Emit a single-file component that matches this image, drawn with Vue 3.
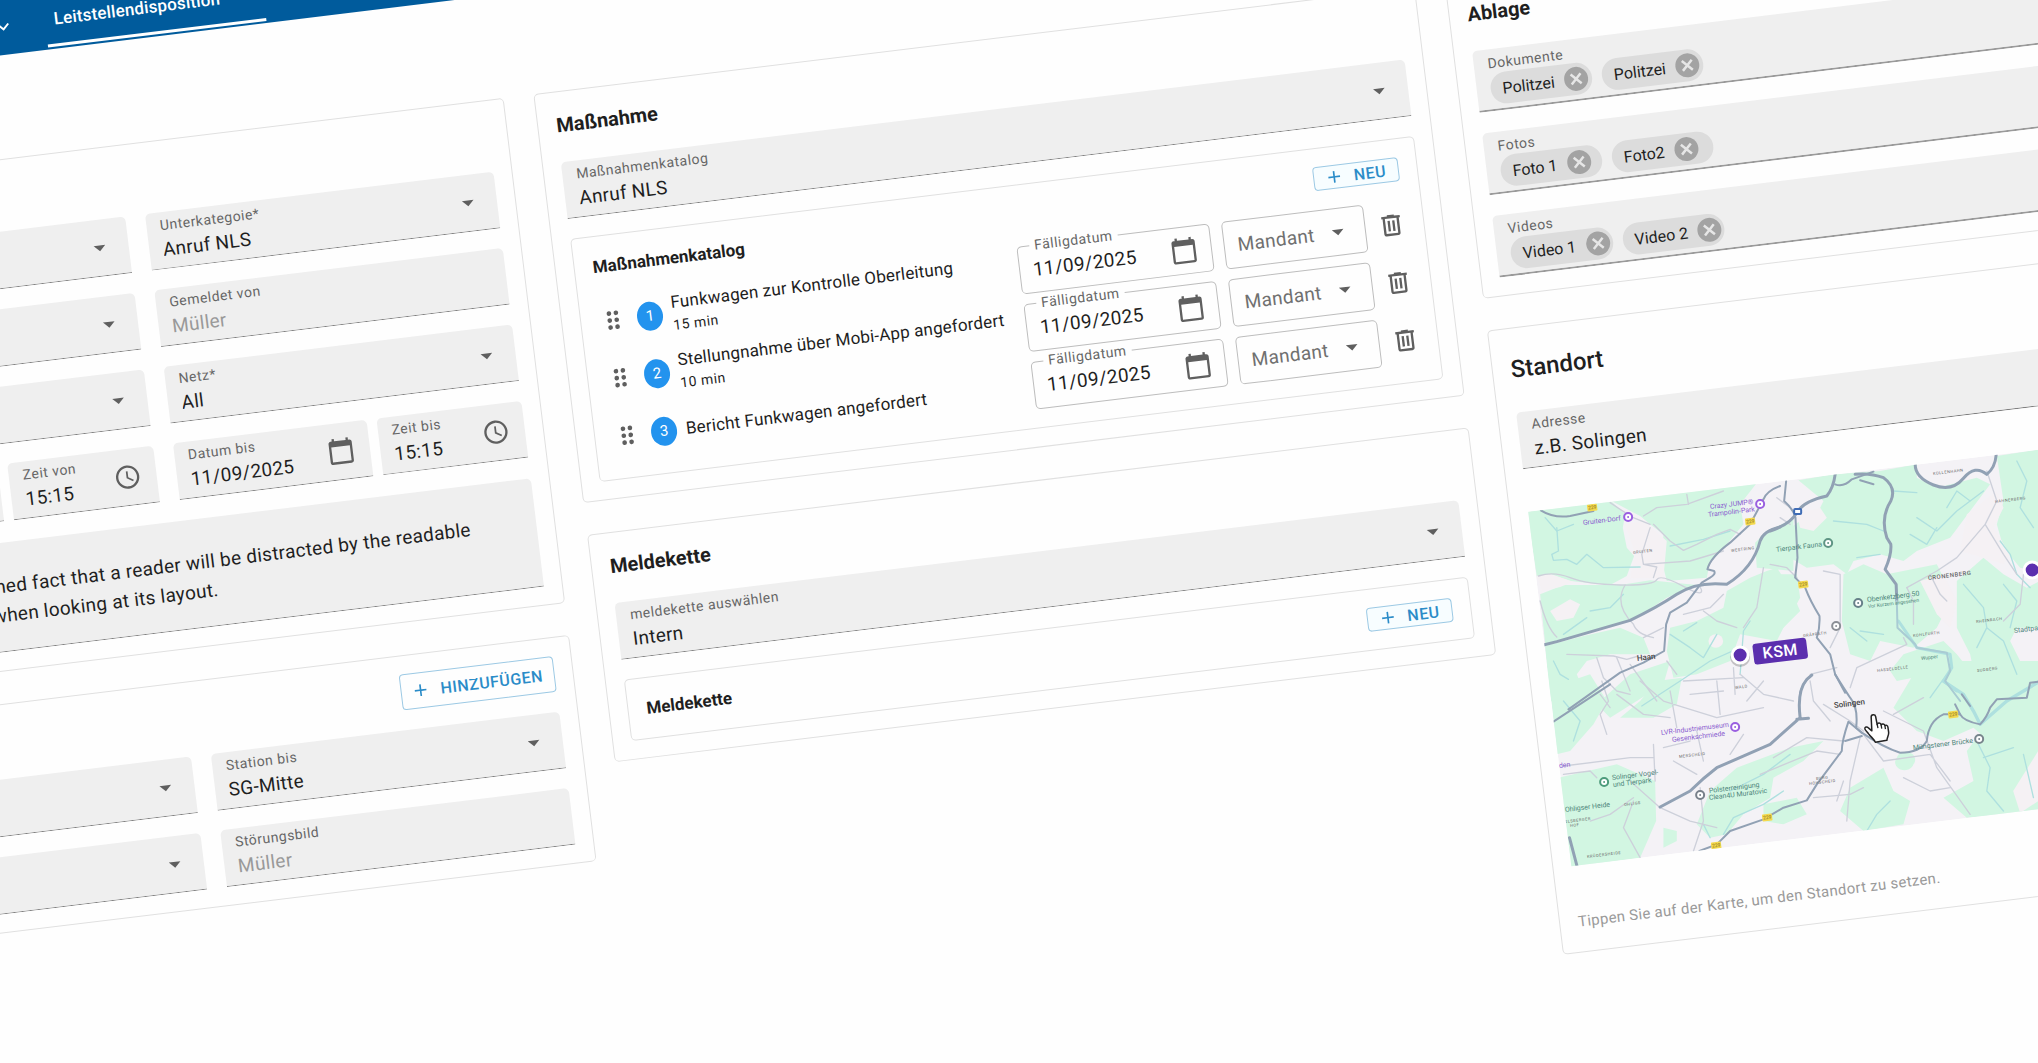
<script setup>
import { ref } from 'vue';

const icons = {
  caret: 'M7 10l5 5 5-5z',
  chevron: 'M7.4 8.6L12 13.2l4.6-4.6L18 10l-6 6-6-6z',
  plus: 'M19 13h-6v6h-2v-6H5v-2h6V5h2v6h6z',
  calendar:
    'M20 3h-1V1h-2v2H7V1H5v2H4c-1.1 0-2 .9-2 2v16c0 1.1.9 2 2 2h16c1.1 0 2-.9 2-2V5c0-1.1-.9-2-2-2zm0 18H4V8h16v13z',
  clock:
    'M12 2C6.5 2 2 6.5 2 12s4.5 10 10 10 10-4.5 10-10S17.5 2 12 2zm0 18c-4.4 0-8-3.6-8-8s3.6-8 8-8 8 3.6 8 8-3.6 8-8 8zm.5-13H11v6l5.2 3.1.8-1.2-4.5-2.7z',
  trash:
    'M15 4V3H9v1H4v2h1v13c0 1.1.9 2 2 2h10c1.1 0 2-.9 2-2V6h1V4zm2 15H7V6h10zM9 8h2v9H9zm4 0h2v9h-2z',
  drag: 'M11 18a2 2 0 1 1-4 0 2 2 0 0 1 4 0zm0-6a2 2 0 1 1-4 0 2 2 0 0 1 4 0zm0-6a2 2 0 1 1-4 0 2 2 0 0 1 4 0zm6 0a2 2 0 1 1-4 0 2 2 0 0 1 4 0zm0 6a2 2 0 1 1-4 0 2 2 0 0 1 4 0zm0 6a2 2 0 1 1-4 0 2 2 0 0 1 4 0z',
};

const comment = ref(
  'It is a long established fact that a reader will be distracted by the readable content of a page when looking at its layout.'
);

const tasks = ref([
  { id: 1, title: 'Funkwagen zur Kontrolle Oberleitung', duration: '15 min', date: '11/09/2025' },
  { id: 2, title: 'Stellungnahme über Mobi-App angefordert', duration: '10 min', date: '11/09/2025' },
  { id: 3, title: 'Bericht Funkwagen angefordert', duration: '', date: '11/09/2025' },
]);

const files = ref([
  { label: 'Dokumente', items: ['Politzei', 'Politzei'] },
  { label: 'Fotos', items: ['Foto 1', 'Foto2'] },
  { label: 'Videos', items: ['Video 1', 'Video 2'] },
]);

const removeTask = (index) => {
  tasks.value.splice(index, 1);
};

const removeFile = (group, index) => {
  group.items.splice(index, 1);
};

// x / y are map positions, type picks the colour and size
const places = [
  { x: 1583, y: 524, type: 'poi', text: 'Gruiten-Dorf' },
  { x: 1710, y: 508, type: 'poi', text: 'Crazy JUMP®' },
  { x: 1708, y: 516, type: 'poi', text: 'Trampolin-Park' },
  { x: 1661, y: 734, type: 'poi', text: 'LVR-Industriemuseum' },
  { x: 1672, y: 741, type: 'poi', text: 'Gesenkschmiede' },
  { x: 1559, y: 767, type: 'poi', text: 'den' },
  { x: 1776, y: 551, type: 'park', text: 'Tierpark Fauna' },
  { x: 1867, y: 601, type: 'park', text: 'Obenketzberg 50' },
  { x: 1868, y: 607, type: 'note', text: 'Vor Kurzem angesehen' },
  { x: 2014, y: 632, type: 'park', text: 'Stadtpark' },
  { x: 1913, y: 749, type: 'park', text: 'Müngstener Brücke' },
  { x: 1612, y: 779, type: 'park', text: 'Solinger Vogel-' },
  { x: 1613, y: 786, type: 'park', text: 'und Tierpark' },
  { x: 1709, y: 792, type: 'park', text: 'Polsterreinigung' },
  { x: 1709, y: 799, type: 'park', text: 'Clean4U Muratovic' },
  { x: 1565, y: 811, type: 'park', text: 'Ohligser Heide' },
  { x: 1921, y: 659, type: 'note', text: 'Wupper' },
  { x: 1637, y: 660, type: 'town', text: 'Haan' },
  { x: 1834, y: 707, type: 'town', text: 'Solingen' },
  { x: 1928, y: 579, type: 'area', text: 'CRONENBERG' },
  { x: 1633, y: 553, type: 'quarter', text: 'GRUITEN' },
  { x: 1731, y: 551, type: 'quarter', text: 'WESTRING' },
  { x: 1735, y: 688, type: 'quarter', text: 'WALD' },
  { x: 1933, y: 474, type: 'quarter', text: 'KÜLLENHAHN' },
  { x: 1995, y: 502, type: 'quarter', text: 'HAHNERBERG' },
  { x: 1976, y: 622, type: 'quarter', text: 'RHEINBACH' },
  { x: 1803, y: 636, type: 'quarter', text: 'GRÄFRATH' },
  { x: 1913, y: 636, type: 'quarter', text: 'KOHLFURTH' },
  { x: 1877, y: 671, type: 'quarter', text: 'HASSELDELLE' },
  { x: 1977, y: 671, type: 'quarter', text: 'SUDBERG' },
  { x: 1679, y: 757, type: 'quarter', text: 'MERSCHEID' },
  { x: 1816, y: 779, type: 'quarter', text: 'BURG' },
  { x: 1809, y: 784, type: 'quarter', text: 'HÖHSCHEID' },
  { x: 1624, y: 805, type: 'quarter', text: 'OHLIGS' },
  { x: 1565, y: 822, type: 'quarter', text: 'ELSBERGER' },
  { x: 1570, y: 826, type: 'quarter', text: 'HOF' },
  { x: 1587, y: 857, type: 'quarter', text: 'KRÜDERSHEIDE' },
];

const pins = [
  { x: 1628, y: 516, color: '#9a5fe0' },
  { x: 1760, y: 503, color: '#9a5fe0' },
  { x: 1735, y: 726, color: '#9a5fe0' },
  { x: 1828, y: 542, color: '#5f9484' },
  { x: 1858, y: 602, color: '#678089' },
  { x: 1836, y: 625, color: '#8b8f96' },
  { x: 1979, y: 738, color: '#78858c' },
  { x: 1604, y: 781, color: '#4d9b7b' },
  { x: 1700, y: 794, color: '#78808a' },
];

const shields = [
  { x: 1592, y: 506 },
  { x: 1750, y: 520 },
  { x: 1803, y: 583 },
  { x: 1953, y: 713 },
  { x: 1767, y: 816 },
  { x: 1716, y: 844 },
];
</script>

<template>
  <div class="viewport">
    <div class="board">
      <header class="topbar">
        <button class="tab" aria-label="Menü">
          <svg class="chevron" viewBox="0 0 24 24"><path :d="icons.chevron" /></svg>
        </button>
        <button class="tab active">
          Leitstellendisposition
          <svg class="chevron" viewBox="0 0 24 24"><path :d="icons.chevron" /></svg>
        </button>
      </header>

      <main class="columns">
        <!-- Report -->
        <div class="column">
          <section class="card details">
            <div class="pair">
              <div class="field">
                <select aria-label="Kategorie"></select>
                <svg class="icon" viewBox="0 0 24 24"><path :d="icons.caret" /></svg>
              </div>
              <div class="field">
                <label for="subcategory">Unterkategoie*</label>
                <select id="subcategory"><option>Anruf NLS</option></select>
                <svg class="icon" viewBox="0 0 24 24"><path :d="icons.caret" /></svg>
              </div>
              <div class="field">
                <select aria-label="Meldeweg"></select>
                <svg class="icon" viewBox="0 0 24 24"><path :d="icons.caret" /></svg>
              </div>
              <div class="field">
                <label for="reporter">Gemeldet von</label>
                <input id="reporter" type="text" placeholder="Müller" />
              </div>
              <div class="field">
                <select aria-label="Bereich"></select>
                <svg class="icon" viewBox="0 0 24 24"><path :d="icons.caret" /></svg>
              </div>
              <div class="field">
                <label for="net">Netz*</label>
                <select id="net"><option>All</option></select>
                <svg class="icon" viewBox="0 0 24 24"><path :d="icons.caret" /></svg>
              </div>
              <div class="period">
                <div class="field">
                  <input type="text" aria-label="Datum von" />
                </div>
                <div class="field">
                  <label for="time-from">Zeit von</label>
                  <input id="time-from" type="text" value="15:15" />
                  <svg class="icon" viewBox="0 0 24 24"><path :d="icons.clock" /></svg>
                </div>
              </div>
              <div class="period">
                <div class="field">
                  <label for="date-to">Datum bis</label>
                  <input id="date-to" type="text" value="11/09/2025" />
                  <svg class="icon" viewBox="0 0 24 24"><path :d="icons.calendar" /></svg>
                </div>
                <div class="field">
                  <label for="time-to">Zeit bis</label>
                  <input id="time-to" type="text" value="15:15" />
                  <svg class="icon" viewBox="0 0 24 24"><path :d="icons.clock" /></svg>
                </div>
              </div>
            </div>
            <textarea v-model="comment" class="comment" aria-label="Bemerkung"></textarea>
          </section>

          <section class="card">
            <div class="actions">
              <button class="outline-button">
                <svg viewBox="0 0 24 24"><path :d="icons.plus" /></svg>
                HINZUFÜGEN
              </button>
            </div>
            <div class="pair">
              <div class="field">
                <select aria-label="Station von"></select>
                <svg class="icon" viewBox="0 0 24 24"><path :d="icons.caret" /></svg>
              </div>
              <div class="field">
                <label for="station-to">Station bis</label>
                <select id="station-to"><option>SG-Mitte</option></select>
                <svg class="icon" viewBox="0 0 24 24"><path :d="icons.caret" /></svg>
              </div>
              <div class="field">
                <select aria-label="Störung"></select>
                <svg class="icon" viewBox="0 0 24 24"><path :d="icons.caret" /></svg>
              </div>
              <div class="field">
                <label for="fault">Störungsbild</label>
                <input id="fault" type="text" placeholder="Müller" />
              </div>
            </div>
          </section>
        </div>

        <!-- Measures -->
        <div class="column">
          <section class="card">
            <h2>Maßnahme</h2>
            <div class="field">
              <label for="catalog">Maßnahmenkatalog</label>
              <select id="catalog"><option>Anruf NLS</option></select>
              <svg class="icon" viewBox="0 0 24 24"><path :d="icons.caret" /></svg>
            </div>
            <div class="subcard">
              <div class="subcard-head">
                <h3>Maßnahmenkatalog</h3>
                <button class="outline-button small">
                  <svg viewBox="0 0 24 24"><path :d="icons.plus" /></svg>
                  NEU
                </button>
              </div>
              <ul class="tasks">
                <li v-for="(task, index) in tasks" :key="task.id">
                  <svg class="icon" viewBox="0 0 24 24"><path :d="icons.drag" /></svg>
                  <span class="number">{{ task.id }}</span>
                  <div class="task-text">
                    <div class="task-title">{{ task.title }}</div>
                    <div v-if="task.duration" class="task-duration">{{ task.duration }}</div>
                  </div>
                  <div class="outlined due">
                    <label :for="`due-${task.id}`">Fälligdatum</label>
                    <input :id="`due-${task.id}`" v-model="task.date" type="text" />
                    <svg class="icon" viewBox="0 0 24 24"><path :d="icons.calendar" /></svg>
                  </div>
                  <div class="outlined client">
                    <select aria-label="Mandant"><option>Mandant</option></select>
                    <svg class="icon" viewBox="0 0 24 24"><path :d="icons.caret" /></svg>
                  </div>
                  <button class="icon-button" aria-label="Löschen" @click="removeTask(index)">
                    <svg class="icon" viewBox="0 0 24 24"><path :d="icons.trash" /></svg>
                  </button>
                </li>
              </ul>
            </div>
          </section>

          <section class="card">
            <h2>Meldekette</h2>
            <div class="field">
              <label for="chain">meldekette auswählen</label>
              <select id="chain"><option>Intern</option></select>
              <svg class="icon" viewBox="0 0 24 24"><path :d="icons.caret" /></svg>
            </div>
            <div class="subcard">
              <div class="subcard-head">
                <h3>Meldekette</h3>
                <button class="outline-button small">
                  <svg viewBox="0 0 24 24"><path :d="icons.plus" /></svg>
                  NEU
                </button>
              </div>
            </div>
          </section>
        </div>

        <!-- Files and location -->
        <div class="column">
          <section class="card">
            <h2>Ablage</h2>
            <div class="files">
              <div v-for="group in files" :key="group.label" class="file-field">
                <span class="file-label">{{ group.label }}</span>
                <div class="chips">
                  <span v-for="(item, index) in group.items" :key="index" class="chip">
                    {{ item }}
                    <button :aria-label="`${item} entfernen`" @click="removeFile(group, index)">
                      <svg viewBox="0 0 24 24"><path d="M6 6l12 12M18 6L6 18" /></svg>
                    </button>
                  </span>
                </div>
              </div>
            </div>
          </section>

          <section class="card location">
            <h2 class="large">Standort</h2>
            <div class="field">
              <label for="address">Adresse</label>
              <input id="address" type="text" value="z.B. Solingen" />
            </div>

            <svg class="map" viewBox="0 0 723 357" preserveAspectRatio="xMinYMin slice">
              <rect width="723" height="357" fill="#f4f2f6" />
              <g transform="translate(-1455 -692) rotate(6.95)">
                <!-- Woods and fields -->
                <g class="woods">
                  <g transform="translate(1510 460) scale(.3333)">
                    <path d="M50 152L300 118 345 160 338 200 350 260 372 285 350 345 300 372 180 360 120 338 80 345z" />
                    <path d="M300 118L700 70 740 66 690 130 700 190 650 250 600 300 590 350 470 360 455 300 460 220 420 190 390 165z" />
                    <path d="M90 400L160 372 330 372 420 358 560 372 470 410 380 470 220 520 105 548z" />
                    <path d="M105 555L220 525 330 500 400 530 420 580 300 580 230 600 200 640 225 700 160 730 120 720z" />
                    <path d="M480 500L560 480 640 440 650 390 720 350 770 330 800 320 840 380 870 450 820 500 800 540 690 520 660 600 560 640 490 650 470 570z" />
                    <path d="M440 660L515 650 500 730 430 770 330 770 390 720z" />
                    <path d="M735 245L770 210 850 175 850 330 740 320z" />
                  </g>
                  <g transform="translate(1770 440) scale(.3333)">
                    <path d="M85 118L190 100 330 90 440 70 440 110 500 140 620 110 660 130 600 210 540 290 440 330 400 360 330 340 250 360 230 400 190 370 110 380 60 350 60 260 150 200 160 180z" />
                    <path d="M680 45L810 25 810 390 750 380 700 320 680 250 700 180z" />
                    <path d="M0 400L80 400 90 470 40 560 -20 590 -60 540z" />
                    <path d="M220 400L280 370 350 400 500 370 520 410 470 450 540 480 500 560 430 620 330 600 300 660 240 640 215 540z" />
                    <path d="M400 640L520 600 560 640 600 690 600 780 500 780 480 700 380 720 360 690z" />
                    <path d="M560 420L640 350 700 400 770 440 810 420 810 560 740 560 720 600 760 680 720 760 620 740 600 640 560 560z" />
                  </g>
                  <g transform="translate(1530 680) scale(.3333)">
                    <path d="M60 20L180 -20 230 60 190 130 120 210 80 220z" />
                    <path d="M200 70L300 -20 420 -60 400 10 320 60 240 110z" />
                    <path d="M85 290L260 250 375 300 378 420 330 530 118 560z" />
                    <path d="M400 440L440 450 440 480 400 500z" />
                    <path d="M540 330L620 260 780 200 880 180 820 240 730 290 720 350 640 400 590 460 540 470 500 430z" />
                    <path d="M700 370L800 350 830 400 760 430 700 420z" />
                    <path d="M960 320L1060 260 1090 330 1140 360 1120 430 1000 450 930 390z" />
                    <path d="M1090 80L1150 -20 1240 -60 1540 -60 1540 60 1480 150 1400 200 1330 140 1240 180 1160 150z" />
                    <path d="M1310 210L1400 90 1540 60 1540 390 1310 410 1240 350 1330 300z" />
                    <path d="M1100 230a28 24 0 1 0 50 20 28 24 0 1 0-50-20z" />
                  </g>
                </g>

                <!-- Built-up patches inside the woods -->
                <g fill="#f5f1f4">
                  <g transform="translate(1510 460) scale(.3333)">
                    <path d="M345 190L400 180 470 240 460 350 360 352 375 280z" />
                    <path d="M120 450L180 415 210 430 190 470 140 480z" />
                    <path d="M595 540a22 20 0 1 0 44 0 22 20 0 1 0-44 0z" />
                    <path d="M80 345L120 340 190 362 150 378 95 390z" />
                  </g>
                  <g transform="translate(1770 440) scale(.3333)">
                    <path d="M80 220L150 200 170 230 130 270 90 260z" />
                    <path d="M590 220L680 150 700 200 670 260 720 340 700 370 640 350 570 330z" />
                    <path d="M450 420L520 400 560 480 540 560 500 520z" />
                  </g>
                  <path d="M2013 790L2038 750 2038 800 2020 812z" />
                </g>

                <!-- Streams -->
                <g class="streams">
                  <g transform="translate(1510 460) scale(.3333)">
                    <path d="M140 200L145 270 125 280 130 298 170 295 200 310 230 280 280 320 390 318" />
                    <path d="M105 170L140 210 190 190M480 255L580 235 660 210M240 450L300 440 340 400M160 520L230 470" />
                    <path d="M480 520L540 560 580 590 620 520M690 640L700 510 720 480M395 735L510 660 600 600 690 560" />
                    <path d="M130 600L150 640 175 655M520 510L560 485" />
                  </g>
                  <g transform="translate(1770 440) scale(.3333)">
                    <path d="M370 150L440 155M440 230L500 270 560 210 640 150M420 280L470 310 500 260M600 180L560 150 530 200" />
                    <path d="M190 240L290 250 340 270M260 350L330 340M270 570L340 580M240 560L290 600" />
                    <path d="M580 430L640 500 650 560 700 600 740 700M700 430L740 480 720 560M650 560L620 620" />
                    <path d="M690 300L720 340 740 400 780 440M740 60L770 120 750 200 790 260" />
                    <path d="M385 540L440 620 540 640 545 680 520 720 560 750" stroke-width="9" />
                  </g>
                  <g transform="translate(1530 680) scale(.3333)">
                    <path d="M580 460L610 410 700 370 760 330M1010 450L1040 400 1080 360M540 470L520 430" />
                    <path d="M1240 0L1300 40 1330 90 1350 130 1430 60 1530 0" stroke-width="10" />
                    <path d="M1340 180L1380 260 1370 330 1420 390M1250 -20L1200 50M1480 220L1510 350M100 60L150 120 130 180" />
                    <path d="M600 330L700 280 780 220M1360 230L1450 200" />
                  </g>
                </g>

                <!-- Side streets -->
                <g class="streets">
                  <g transform="translate(1510 460) scale(.3333)">
                    <path d="M85 345Q130 330 180 350T330 372 440 356 520 376 570 378" />
                    <path d="M90 420Q110 500 140 528M345 372Q310 430 370 490 380 520 430 530M170 580L310 585 350 595 385 585M260 590L280 650 320 690 360 700M430 190L480 240 520 268 560 250 620 220 660 205 690 220M300 125L345 155M345 160L420 190M420 200L395 280 400 310 440 318 430 350M400 310L540 300 640 270M400 165L440 140 530 130 640 90M530 100L535 130M580 450L620 480 680 500M760 320L740 440 700 500M640 400L600 440 520 460" />
                    <path d="M320 590L360 690M360 610L440 720M400 530L460 500M270 700L300 740M520 660L700 650M540 700L640 690M670 620L675 700M470 600L500 640" />
                  </g>
                  <g transform="translate(1770 440) scale(.3333)">
                    <path d="M650 90L680 180 645 250 560 350 500 390 410 440M645 250L700 340 740 400" />
                    <path d="M160 390L210 400 210 560 180 620M0 370L50 380 80 410M20 170L60 200M30 230L60 250M240 740L260 680 410 610M410 610L400 590M120 700L200 680M410 440L430 480 430 550" />
                    <path d="M480 400L510 460 530 480M760 400L750 490 700 540" />
                  </g>
                  <g transform="translate(1530 680) scale(.3333)">
                    <path d="M215 0L235 60 210 100 230 160M100 255L300 230 370 230M100 280L180 270 200 290M370 190L375 300M300 300L390 380 480 420 560 440M180 420L240 400 310 350M310 360L280 440 330 530M490 510L520 420 510 320" />
                    <path d="M260 40L340 100 420 110M330 0L400 60 560 110 700 80M420 30L440 140M560 0L570 100M630 -20L700 40 790 60M500 150L520 240M700 0L650 60M840 0L850 60 900 120M880 70L960 120 1000 150M730 230L830 170 940 180M690 280L860 210 930 220M850 350L960 340 1000 320M990 170L960 300 950 420M1000 160L1060 240 1200 220M1060 90L1180 150 1220 260 1320 400M1180 50L1090 100M1200 220L1260 300M1120 290L1200 330 1260 320" />
                    <path d="M940 300L920 360M600 220L640 160M430 240L500 280M400 200L480 180" />
                  </g>
                </g>

                <!-- Main roads -->
                <g class="roads">
                  <g transform="translate(1510 460) scale(.3333)">
                    <path d="M92 148Q130 172 180 165L250 150" />
                    <path d="M810 75Q770 90 760 115L720 190 660 245Q600 290 592 325L612 330Q618 340 600 350L575 365 530 425 480 455 468 490 462 570 400 605 330 635 175 745" />
                    <path class="wide" d="M100 552L140 542 360 478Q440 440 500 400T650 370Q730 320 750 240 760 210 810 198" />
                  </g>
                  <g transform="translate(1770 440) scale(.3333)">
                    <path d="M48 120L42 180Q70 205 76 230L82 350 75 410 105 440Q120 480 148 525 150 560 140 590L180 640 195 700 225 755" />
                    <path class="wide" d="M0 270Q60 250 80 215T170 165Q190 140 195 100M255 100Q300 95 340 110 380 140 362 180 330 230 350 290L362 310Q365 340 345 385L378 430 380 480" />
                    <path d="M195 130Q220 140 245 115L310 92M270 118L310 130" />
                    <path class="quiet" d="M380 480L382 560 435 610 440 620 530 635 540 690 525 720 570 780" />
                    <path class="wide" d="M435 70Q435 110 490 132T580 112 650 100Q675 80 678 42" />
                    <path d="M90 755Q100 720 125 702" />
                  </g>
                  <g transform="translate(1530 680) scale(.3333)">
                    <path class="wide" d="M390 378L480 330Q520 290 560 260L720 190 810 110Q800 30 830 -5L845 -18M800 115L835 112" />
                    <path d="M915 -20Q940 20 960 50 985 80 978 140L995 155Q1060 200 1110 215 1170 215 1190 180 1195 120 1240 100L1290 100Q1300 120 1350 130 1370 110 1380 80L1400 55 1490 50 1500 5 1540 0" />
                    <path d="M995 155L955 122Q935 180 935 210L860 310 830 358 760 380 700 415 600 450 560 490 508 510M945 180L995 165M1275 70L1290 100" />
                    <path class="wide" d="M118 470L142 560" />
                    <path d="M1320 75L1295 40" />
                    <path d="M70 122L240 10" />
                  </g>
                </g>

                <!-- Road numbers -->
                <g
                  v-for="(shield, index) in shields"
                  :key="`s${index}`"
                  :transform="`translate(${shield.x} ${shield.y}) rotate(-6.95)`"
                >
                  <rect x="-5" y="-3" width="10" height="7" rx="1" fill="#f4d94e" />
                  <text class="shield" x="0" y="2">229</text>
                </g>
                <rect x="1794" y="508" width="7" height="5" rx="1" fill="#fff" stroke="#3f6cb5" stroke-width="2" />

                <g v-for="(pin, index) in pins" :key="`p${index}`" :transform="`translate(${pin.x} ${pin.y})`">
                  <circle r="4" fill="#fff" :stroke="pin.color" stroke-width="2" />
                  <circle r="1" :fill="pin.color" />
                </g>

                <text
                  v-for="place in places"
                  :key="place.text"
                  :class="place.type"
                  :transform="`translate(${place.x} ${place.y}) rotate(-6.95)`"
                >{{ place.text }}</text>

                <!-- Vehicles -->
                <g class="vehicle">
                  <circle cx="1740" cy="656" r="10" fill="#000" opacity=".2" />
                  <circle cx="1740" cy="654" r="8" />
                  <circle cx="2032" cy="569" r="8" />
                  <g transform="translate(1752 643) rotate(-6.95)">
                    <rect width="54" height="21" rx="3" fill="#5b2fae" />
                    <text x="27" y="16">KSM</text>
                  </g>
                </g>

                <!-- Hand pointer -->
                <g transform="translate(1864 713)">
                  <path
                    d="M7 3c0-3 4-3 4.5-.5l1.5 8c.5-2 3.5-2 4 .5.8-1.5 3.3-1.3 3.8.8 1-1 2.8-.6 3 1.5l.7 5c.3 3-1.5 4.5-1.8 8l-11.5 2c-1.5-3.5-4.2-5-6.700-8.500-1.200-1.800-3.500-3.600-3.800-5-.3-2 2-2.500 3.500-1l3.500 3z"
                    fill="#fff"
                    stroke="#222"
                    stroke-width="1.5"
                    stroke-linejoin="round"
                  />
                  <path d="M13 10l.8 4M17 11l.6 3.5M20.8 12l.5 3" fill="none" stroke="#222" stroke-width="1.3" />
                </g>
              </g>
            </svg>
            <p class="hint">Tippen Sie auf der Karte, um den Standort zu setzen.</p>
          </section>
        </div>
      </main>
    </div>
  </div>
</template>

<style>
body {
  margin: 0;
  background: #fefefe;
}
</style>

<style scoped>
* {
  box-sizing: border-box;
}

.viewport {
  height: 100vh;
  overflow: hidden;
  font-family: Roboto, 'Liberation Sans', sans-serif;
  color: #1f1f1f;
}

/* the whole board is tilted around the top left corner of the window */
.board {
  width: 121.2vw;
  margin-left: -13.4vw;
  transform: rotate(-6.95deg);
  transform-origin: 13.4vw 0;
}

button,
input,
select,
textarea {
  margin: 0;
  padding: 0;
  border: 0;
  background: none;
  color: inherit;
  font: inherit;
  letter-spacing: inherit;
  appearance: none;
  outline: none;
}

button {
  cursor: pointer;
}

.topbar {
  display: flex;
  gap: 18px;
  height: 55px;
  padding-left: 261px;
  background: #005b9c;
  color: #fff;
}

.tab {
  display: flex;
  align-items: center;
  gap: 8px;
  height: 53px;
  padding: 0 12px 0 0;
  font-size: 17px;
  font-weight: 500;
  letter-spacing: 0.2px;
}

.tab.active {
  padding: 0 12px 0 9px;
  border-bottom: 3px solid #fff;
}

.chevron {
  width: 24px;
  height: 24px;
  fill: currentColor;
}

.columns {
  display: grid;
  grid-template-columns: 6fr 7fr 6fr;
  align-items: start;
  gap: 30px;
  padding-top: 103px;
}

.column {
  display: grid;
  gap: 32px;
  min-width: 0;
}

.card {
  min-width: 0;
  padding: 18px;
  border: 1px solid #e0e0e0;
  border-radius: 5px;
}

.details {
  padding-top: 71px;
}

.location {
  padding-bottom: 20px;
}

h2,
h3,
p {
  margin: 0;
}

h2 {
  margin-bottom: 22px;
  font-size: 20px;
  font-weight: 700;
  line-height: 30px;
}

h2.large {
  padding-top: 8px;
  margin-bottom: 28px;
  font-size: 24px;
  font-weight: 500;
}

h3 {
  font-size: 17px;
  font-weight: 700;
  line-height: 24px;
}

/* Filled fields */
.field {
  display: grid;
  grid-template-columns: 1fr auto;
  grid-template-rows: 16px 24px;
  row-gap: 5px;
  min-width: 0;
  height: 57px;
  padding: 5px 15px 6px 14px;
  border-bottom: 1px solid #808080;
  border-radius: 5px 5px 0 0;
  background: #efefef;
  letter-spacing: 0.3px;
}

.field label {
  color: #666;
  font-size: 14px;
  line-height: 16px;
  letter-spacing: 0.5px;
}

.field input,
.field select {
  grid-row: 2;
  grid-column: 1;
  width: 100%;
  min-width: 0;
  font-size: 19px;
  line-height: 24px;
}

.field input::placeholder {
  color: #999;
  opacity: 1;
}

.icon {
  display: block;
  width: 28px;
  height: 28px;
  fill: #5f5f5f;
}

.field .icon {
  grid-row: 1 / 3;
  grid-column: 2;
  align-self: center;
}

.pair {
  display: grid;
  grid-template-columns: 1fr 1fr;
  gap: 20px;
}

.period {
  display: grid;
  grid-template-columns: 4fr 3fr;
  gap: 10px;
  min-width: 0;
}

.comment {
  display: block;
  width: 100%;
  height: 109px;
  margin-top: 21px;
  padding: 29px 14px 0;
  border-bottom: 1px solid #808080;
  border-radius: 5px 5px 0 0;
  background: #efefef;
  font-size: 19px;
  line-height: 29px;
  letter-spacing: 0.3px;
  resize: none;
  overflow: hidden;
}

.actions {
  display: flex;
  justify-content: flex-end;
  margin-bottom: 20px;
}

.outline-button {
  display: flex;
  align-items: center;
  gap: 10px;
  height: 36px;
  padding: 0 11px 0 9px;
  border: 1px solid #9cc9e4;
  border-radius: 4px;
  color: #2b8cc8;
  font-size: 16px;
  font-weight: 500;
  letter-spacing: 0.5px;
}

.outline-button svg {
  width: 20px;
  height: 20px;
  fill: currentColor;
}

.outline-button.small {
  height: 24px;
  padding: 0 12px 0 10px;
  background: #f7fdff;
}

/* Measures */
.subcard {
  margin-top: 20px;
  padding: 18px;
  border: 1px solid #e0e0e0;
  border-radius: 5px;
}

.subcard-head {
  display: flex;
  align-items: center;
  justify-content: space-between;
}

.tasks {
  display: grid;
  gap: 10px;
  margin: 19px 0 0;
  padding: 0;
  list-style: none;
}

.tasks li {
  display: flex;
  align-items: center;
}

.number {
  display: flex;
  align-items: center;
  justify-content: center;
  width: 26px;
  height: 29px;
  margin: 0 9px 0 10px;
  border-radius: 50%;
  background: #2393ee;
  color: #fff;
  font-size: 15px;
}

.task-text {
  flex: 1;
  min-width: 0;
}

.task-title {
  font-size: 17px;
  line-height: 25px;
  letter-spacing: 0.2px;
}

.task-duration {
  font-size: 14px;
  line-height: 21px;
  letter-spacing: 0.5px;
}

.outlined {
  position: relative;
  display: flex;
  align-items: center;
  height: 48px;
  padding: 0 13px;
  border: 1px solid #bdbdbd;
  border-radius: 5px;
  font-size: 19px;
  letter-spacing: 0.3px;
}

.outlined label {
  position: absolute;
  top: -9px;
  left: 12px;
  padding: 0 5px;
  background: #fefefe;
  color: #666;
  font-size: 14px;
  line-height: 16px;
  letter-spacing: 0.5px;
}

.outlined input,
.outlined select {
  flex: 1;
  min-width: 0;
  width: 0;
}

.due {
  width: 194px;
  margin-right: 12px;
}

.client {
  width: 143px;
  margin-right: 12px;
  color: #707070;
}

/* Files */
.files {
  display: grid;
  gap: 21px;
}

.file-field {
  height: 62px;
  padding: 6px 14px 0;
  border-bottom: 2px solid #9a9a9a;
  border-radius: 5px 5px 0 0;
  background: #efefef;
}

.file-label {
  display: block;
  color: #666;
  font-size: 14px;
  line-height: 16px;
  letter-spacing: 0.5px;
}

.chips {
  display: flex;
  gap: 10px;
  margin-top: 2px;
}

.chip {
  display: flex;
  align-items: center;
  gap: 10px;
  min-width: 102px;
  height: 32px;
  padding: 0 3px 0 12px;
  border-radius: 16px;
  background: #dcdcdc;
  font-size: 16px;
}

.chip button {
  width: 24px;
  height: 24px;
  border-radius: 50%;
  background: #a3a3a3;
}

.chip svg {
  display: block;
  width: 20px;
  height: 20px;
  margin: 2px;
  stroke: #e6e6e6;
  stroke-width: 3;
}

/* Location */
.map {
  display: block;
  width: 100%;
  height: 357px;
  margin-top: 43px;
}

.hint {
  margin-top: 46px;
  color: #9a9a9a;
  font-size: 15px;
  line-height: 20px;
  letter-spacing: 0.3px;
}

.woods {
  fill: #d2f6e2;
}

.streams,
.streets,
.roads {
  fill: none;
  stroke-linecap: round;
  stroke-linejoin: round;
}

.streams {
  stroke: #aee0df;
  stroke-width: 4;
}

.streets {
  stroke: #cdd0da;
  stroke-width: 4;
}

.roads {
  stroke: #91a1b4;
  stroke-width: 6;
}

.roads .wide {
  stroke-width: 9;
}

.roads .quiet {
  stroke: #a9cbd3;
}

.map text {
  font-size: 7px;
  fill: #4d857a;
}

.map .poi {
  fill: #8a5ccf;
}

.map .note {
  font-size: 5px;
}

.map .town {
  font-size: 8px;
  font-weight: 500;
  fill: #444;
}

.map .area {
  font-size: 6px;
  font-weight: 500;
  letter-spacing: 0.5px;
  fill: #666;
}

.map .quarter {
  font-size: 4px;
  letter-spacing: 0.5px;
  fill: #666;
}

.map .shield {
  font-size: 5px;
  fill: #8a7420;
  text-anchor: middle;
}

.vehicle > circle {
  stroke: #fff;
  stroke-width: 3;
  fill: #5b2fae;
}

.vehicle > circle:first-child {
  stroke: none;
  fill: #000;
}

.map .vehicle text {
  fill: #fff;
  font-size: 16px;
  font-weight: 500;
  letter-spacing: 0.5px;
  text-anchor: middle;
}
</style>
